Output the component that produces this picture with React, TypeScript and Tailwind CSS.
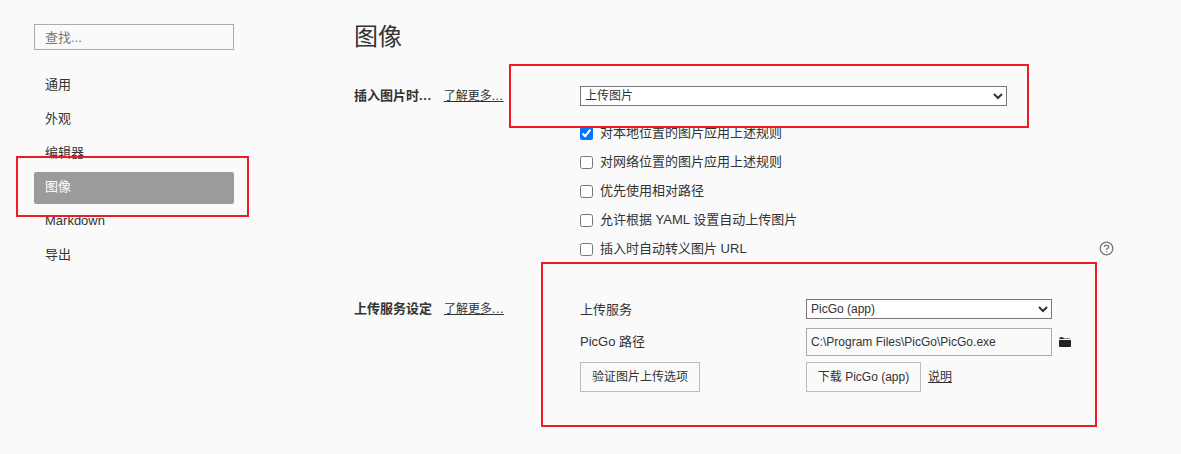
import React from 'react';

const navItems = ['通用', '外观', '编辑器', '图像', 'Markdown', '导出'];

const imageOptions = [
    { label: '对本地位置的图片应用上述规则', checked: true },
    { label: '对网络位置的图片应用上述规则', checked: false },
    { label: '优先使用相对路径', checked: false },
    { label: '允许根据 YAML 设置自动上传图片', checked: false },
    { label: '插入时自动转义图片 URL', checked: false },
];

const Dots = () => <span className="tracking-[0.6px]">...</span>;

const SectionLabel = ({ title, dots }: { title: string; dots?: boolean }) => (
    <div className="w-[226px] shrink-0 flex items-center gap-[12px] h-[20px]">
        <span className="font-bold text-[#333]">{title}{dots && <Dots />}</span>
        <a className="underline text-[#333] text-[12px]">了解更多<Dots /></a>
    </div>
);

const RedBox = ({ className }: { className: string }) => (
    <div className={`absolute border-2 border-[#ed1c24] pointer-events-none ${className}`} />
);

export default function App() {
    return (
        <div className="relative flex h-[454px] w-[1181px] overflow-hidden bg-[#fafafa] text-[13px] text-[#333] font-['Liberation_Sans','Noto_Sans_CJK_SC',sans-serif]">
            {/* Sidebar */}
            <aside className="w-[354px] shrink-0 pl-[34px] pt-[24px]">
                <input
                    placeholder="查找..."
                    className="w-[200px] h-[26px] border border-[#aaa] bg-[#fafafa] px-[10px] text-[13px] placeholder-[#777] outline-none"
                />
                <nav className="mt-[20px] flex w-[200px] flex-col gap-[2px]">
                    {navItems.map((item) => (
                        <div
                            key={item}
                            className={`h-[32px] rounded-[2px] px-[11px] leading-[30px] ${item === '图像' ? 'bg-[#9b9b9b] text-white' : 'text-[#333]'}`}
                        >
                            {item}
                        </div>
                    ))}
                </nav>
            </aside>

            {/* Content */}
            <main className="flex-1 pt-[20px]">
                <h1 className="text-[24px] leading-[34px] font-normal text-[#333]">图像</h1>

                <div className="mt-[32px] flex">
                    <SectionLabel title="插入图片时" dots />
                    <select className="w-[427px] h-[20px] border border-[#767676] bg-white pl-0 text-[12px] text-[#333]">
                        <option>上传图片</option>
                    </select>
                </div>

                <div className="ml-[226px] mt-[17px] flex flex-col gap-[9px]">
                    {imageOptions.map((option) => (
                        <label key={option.label} className="flex h-[20px] items-center gap-[7px]">
                            <input type="checkbox" defaultChecked={option.checked} className="m-0 h-[13px] w-[13px] accent-[#0075ff]" />
                            <span>{option.label}</span>
                        </label>
                    ))}
                </div>

                <div className="relative mt-[40px] flex">
                    <SectionLabel title="上传服务设定" />
                    <div className="flex flex-col">
                        <div className="flex h-[20px] items-center">
                            <span className="w-[226px] pt-[2px]">上传服务</span>
                            <select className="w-[246px] h-[20px] border border-[#767676] bg-white pl-0 text-[12px] text-[#333]">
                                <option>PicGo (app)</option>
                            </select>
                        </div>
                        <div className="mt-[9px] flex h-[28px] items-center">
                            <span className="w-[226px]">PicGo 路径</span>
                            <input
                                defaultValue="C:\Program Files\PicGo\PicGo.exe"
                                className="w-[246px] h-[28px] border border-[#aaa] bg-[#fafafa] px-[4px] text-[12px] text-[#333] outline-none"
                            />
                            {/* folder icon */}
                            <svg className="ml-[7px]" width="12" height="10" viewBox="0 0 12 10" fill="#222">
                                <path d="M0.5 2 V0.8 Q0.5 0.3 1 0.3 H4 L5 1.4 H11 Q11.5 1.4 11.5 2 Z" />
                                <path d="M0 3 H12 V9 Q12 10 11 10 H1 Q0 10 0 9 Z" />
                            </svg>
                        </div>
                        <div className="mt-[6px] flex items-center">
                            <div className="w-[226px]">
                                <button className="h-[30px] w-[120px] border border-[#bbb] bg-[#fafafa] text-[12px] text-[#333]">验证图片上传选项</button>
                            </div>
                            <button className="h-[30px] w-[115px] border border-[#bbb] bg-[#fafafa] text-[12px] text-[#333]">下载 PicGo (app)</button>
                            <a className="ml-[7px] underline text-[12px] text-[#333]">说明</a>
                        </div>
                    </div>
                </div>
            </main>

            {/* Help icon */}
            <svg className="absolute left-[1099px] top-[241px]" width="15" height="15" viewBox="0 0 15 15" fill="none" stroke="#777" strokeWidth="1.3">
                <circle cx="7.5" cy="7.5" r="6.3" />
                <path d="M5.5 6 C5.5 3.6 9.6 3.6 9.6 6 C9.6 7.4 7.5 7.4 7.5 9" />
                <path d="M7.5 10.2 V11.4" />
            </svg>

            {/* Annotation boxes */}
            <RedBox className="left-[16px] top-[156px] h-[61px] w-[233px]" />
            <RedBox className="left-[509px] top-[64px] h-[64px] w-[520px]" />
            <RedBox className="left-[541px] top-[262px] h-[165px] w-[556px]" />
        </div>
    );
}
